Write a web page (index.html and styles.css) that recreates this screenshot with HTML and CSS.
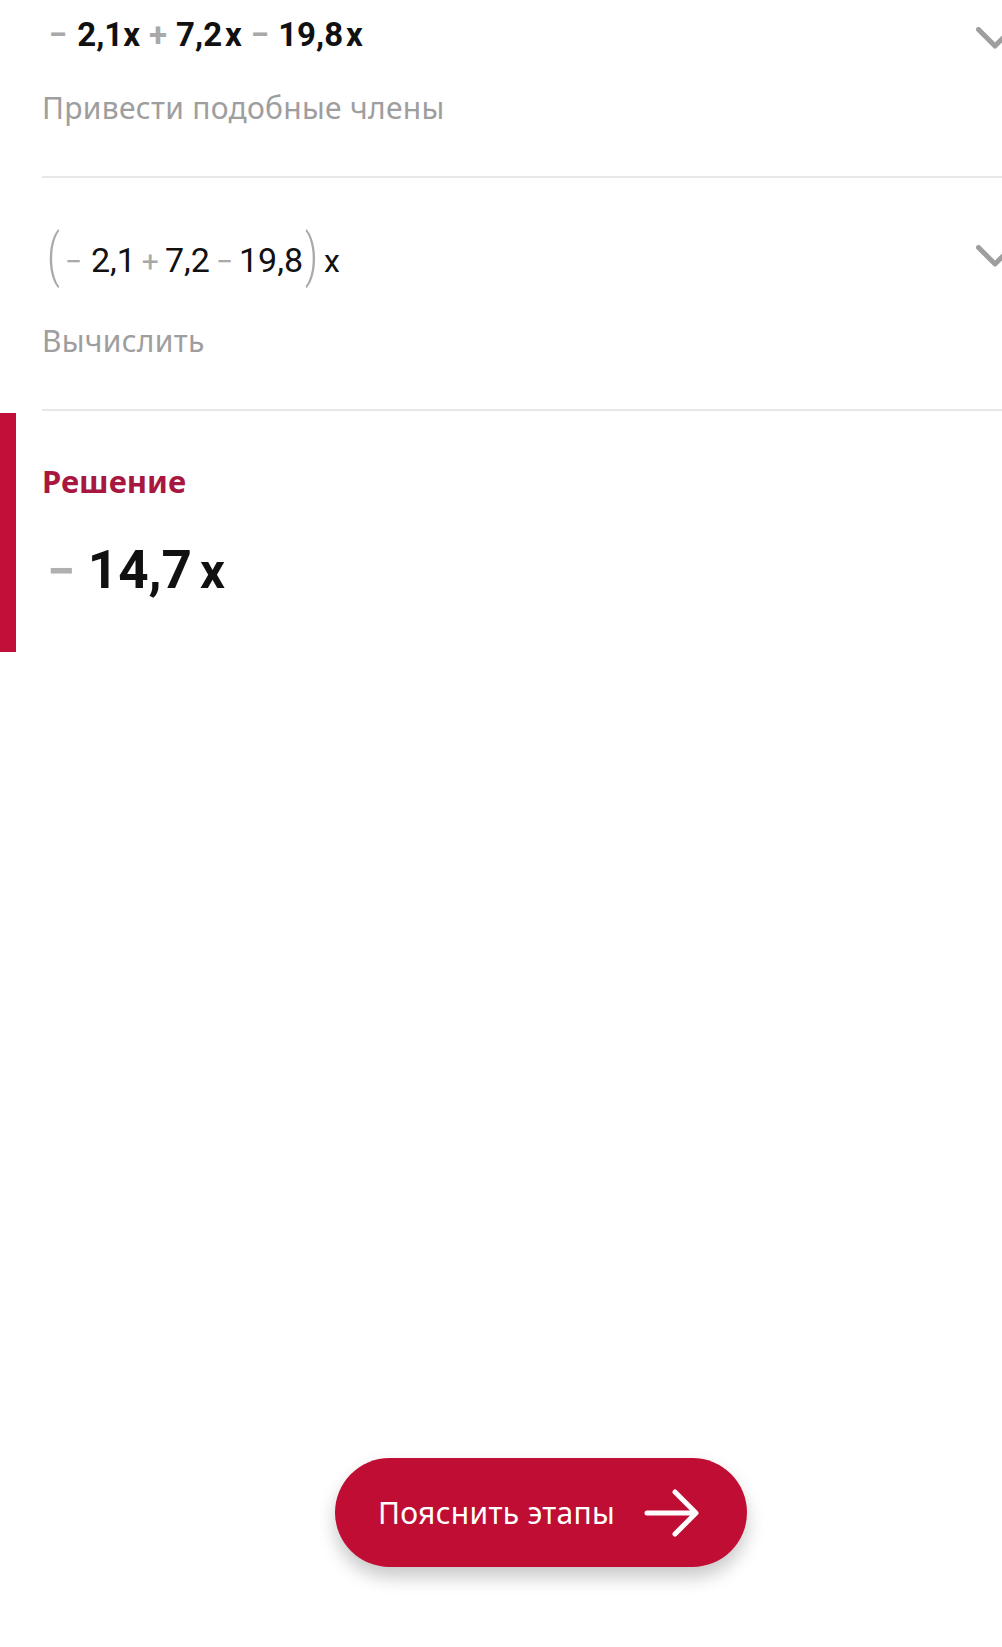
FILE: index.html
```html
<!DOCTYPE html>
<html lang="ru">
<head>
<meta charset="utf-8">
<title>Решение</title>
<link rel="stylesheet" href="styles.css">
</head>
<body>
<main class="page">
  <section class="step step-first">
    <div class="step-head">
      <div class="expr expr-bold">
        <span class="op op-lead">−</span><span class="num">2,1x</span><span class="op">+</span><span class="num">7,2<span class="gapx">x</span></span><span class="op">−</span><span class="num">19,8<span class="gapx">x</span></span>
      </div>
      <svg class="chev" width="38" height="22" viewBox="0 0 38 22"><polyline points="2.5,2.5 19,19 35.5,2.5" fill="none" stroke="#9e9e9e" stroke-width="5" stroke-linecap="round" stroke-linejoin="round"/></svg>
    </div>
    <div class="step-label">Привести подобные члены</div>
  </section>
  <div class="divider"></div>

  <section class="step step-second">
    <div class="step-head">
      <div class="expr expr-reg">
        <span class="paren">(</span><span class="op op-sm op-lead2">−</span><span class="num">2,1</span><span class="op op-sm">+</span><span class="num">7,2</span><span class="op op-sm">−</span><span class="num">19,8</span><span class="paren paren-r">)</span><span class="var">x</span>
      </div>
      <svg class="chev chev-2" width="38" height="22" viewBox="0 0 38 22"><polyline points="2.5,2.5 19,19 35.5,2.5" fill="none" stroke="#9e9e9e" stroke-width="5" stroke-linecap="round" stroke-linejoin="round"/></svg>
    </div>
    <div class="step-label step-label-2">Вычислить</div>
  </section>
  <div class="divider divider-2"></div>

  <section class="result">
    <h2 class="result-title">Решение</h2>
    <div class="result-expr"><span class="result-minus">−</span><span class="result-num">14,7</span><span class="result-var">x</span></div>
  </section>

  <div class="spacer"></div>

  <footer class="footer">
    <button class="explain-btn" type="button">
      <span class="explain-text">Пояснить этапы</span>
      <svg class="arrow" width="56" height="50" viewBox="0 0 56 50"><path d="M3 25 H51 M31 4 L52 25 L31 46" fill="none" stroke="#ffffff" stroke-width="5" stroke-linecap="round" stroke-linejoin="round"/></svg>
    </button>
  </footer>
</main>
</body>
</html>
```

FILE: styles.css
```css
html, body {
  margin: 0;
  padding: 0;
  background: #ffffff;
}
body {
  overflow: hidden;
  font-family: "Noto Sans", "DejaVu Sans", sans-serif;
}
.page {
  min-height: 1647px;
  display: flex;
  flex-direction: column;
}
.step {
  padding-left: 42px;
}
.step-first {
  padding-top: 15px;
}
.step-second {
  padding-top: 54px;
}
.step-head {
  display: flex;
  justify-content: space-between;
  align-items: flex-start;
}
.expr {
  font-family: Roboto, "Liberation Sans", sans-serif;
  color: #111111;
  white-space: nowrap;
  display: flex;
  align-items: baseline;
}
.expr-bold {
  font-size: 33px;
  font-weight: 700;
  line-height: 40px;
}
.expr-bold .op {
  color: #a9a9a9;
  font-weight: 700;
  margin: 0 9px;
}
.expr-bold .op-lead {
  margin-left: 7px;
  margin-right: 10px;
}
.gapx {
  margin-left: 3px;
}
.expr-reg {
  font-size: 34px;
  font-weight: 400;
  line-height: 54px;
  height: 54px;
}
.expr-reg .op-sm {
  color: #a9a9a9;
  font-size: 30px;
  margin: 0 6px;
}
.expr-reg .op-lead2 {
  margin-left: 5px;
  margin-right: 9px;
}
.paren {
  color: #a9a9a9;
  font-weight: 300;
  font-size: 40px;
  display: inline-block;
  transform: scaleY(1.45);
  transform-origin: 50% 62%;
  margin-left: 5px;
}
.paren-r {
  margin-left: 2px;
  margin-right: 6px;
}
.var {
  font-size: 32px;
}
.chev {
  flex: none;
  margin-top: 12px;
  margin-right: -12px;
}
.chev-2 {
  margin-top: 13px;
}
.step-label {
  margin-top: 33px;
  font-size: 30px;
  line-height: 40px;
  color: #9e9e9e;
  letter-spacing: 0.3px;
}
.step-label-2 {
  margin-top: 35px;
}
.divider {
  margin-left: 42px;
  margin-top: 48px;
  height: 2px;
  background: #e7e7e7;
}
.result {
  margin-top: 2px;
  border-left: 16px solid #c0103a;
  padding: 48px 0 47px 26px;
}
.result-title {
  margin: 0;
  font-size: 31px;
  line-height: 40px;
  font-weight: 700;
  color: #a8173f;
}
.result-expr {
  margin-top: 36px;
  font-family: Roboto, "Liberation Sans", sans-serif;
  font-weight: 700;
  font-size: 53px;
  line-height: 66px;
  color: #111111;
  display: flex;
  align-items: baseline;
}
.result-minus {
  color: #b0b0b0;
  font-size: 50px;
  margin-left: 5px;
  margin-right: 13px;
}
.result-var {
  margin-left: 8px;
  font-size: 49px;
}
.spacer {
  flex: 1;
}
.footer {
  padding: 0 0 80px 335px;
}
.explain-btn {
  width: 412px;
  height: 109px;
  border: none;
  border-radius: 55px;
  background: #c00d33;
  box-shadow: 0 10px 18px rgba(0, 0, 0, 0.22);
  display: flex;
  align-items: center;
  padding: 0 0 0 43px;
  color: #ffffff;
  font-family: "Noto Sans", "DejaVu Sans", sans-serif;
  font-size: 30px;
  cursor: pointer;
}
.explain-text {
  line-height: 40px;
  letter-spacing: 0.3px;
}
.arrow {
  margin-left: 29px;
}
```
